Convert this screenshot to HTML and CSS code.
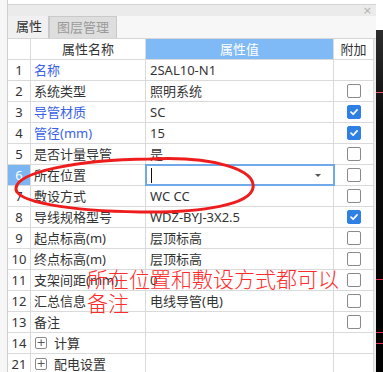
FILE: index.html
```html
<!DOCTYPE html>
<html lang="zh-CN">
<head>
  <meta charset="UTF-8" />
  <title>属性</title>
  <link rel="stylesheet" href="styles.css">
</head>
<body>
  <div class="screen">
    <div class="gutter"></div>

    <div class="panel">
      <div class="titlebar"><span class="close">×</span></div>
      <div class="tabs">
        <div class="tab active">属性</div>
        <div class="tab">图层管理</div>
      </div>

      <div class="grid-wrap">
        <div class="props">
          <div class="row head">
            <div class="cell num"></div>
            <div class="cell name center">属性名称</div>
            <div class="cell value center hl">属性值</div>
            <div class="cell add center">附加</div>
          </div>

          <div class="row">
            <div class="cell num">1</div>
            <div class="cell name key">名称</div>
            <div class="cell value">2SAL10-N1</div>
            <div class="cell add"></div>
          </div>
          <div class="row">
            <div class="cell num">2</div>
            <div class="cell name">系统类型</div>
            <div class="cell value">照明系统</div>
            <div class="cell add"><span class="box"></span></div>
          </div>
          <div class="row">
            <div class="cell num">3</div>
            <div class="cell name key">导管材质</div>
            <div class="cell value">SC</div>
            <div class="cell add"><span class="box on"><svg viewBox="0 0 14 14"><path d="M3.5 7.2 L6 9.6 L10.6 4.6" /></svg></span></div>
          </div>
          <div class="row">
            <div class="cell num">4</div>
            <div class="cell name key">管径(mm)</div>
            <div class="cell value">15</div>
            <div class="cell add"><span class="box on"><svg viewBox="0 0 14 14"><path d="M3.5 7.2 L6 9.6 L10.6 4.6" /></svg></span></div>
          </div>
          <div class="row">
            <div class="cell num">5</div>
            <div class="cell name">是否计量导管</div>
            <div class="cell value">是</div>
            <div class="cell add"><span class="box"></span></div>
          </div>
          <div class="row">
            <div class="cell num current">6</div>
            <div class="cell name">所在位置</div>
            <div class="cell value editing"><span class="caret"></span><span class="drop"></span></div>
            <div class="cell add"><span class="box"></span></div>
          </div>
          <div class="row">
            <div class="cell num">7</div>
            <div class="cell name">敷设方式</div>
            <div class="cell value">WC CC</div>
            <div class="cell add"><span class="box"></span></div>
          </div>
          <div class="row">
            <div class="cell num">8</div>
            <div class="cell name">导线规格型号</div>
            <div class="cell value">WDZ-BYJ-3X2.5</div>
            <div class="cell add"><span class="box on"><svg viewBox="0 0 14 14"><path d="M3.5 7.2 L6 9.6 L10.6 4.6" /></svg></span></div>
          </div>
          <div class="row">
            <div class="cell num">9</div>
            <div class="cell name">起点标高(m)</div>
            <div class="cell value">层顶标高</div>
            <div class="cell add"><span class="box"></span></div>
          </div>
          <div class="row">
            <div class="cell num">10</div>
            <div class="cell name">终点标高(m)</div>
            <div class="cell value">层顶标高</div>
            <div class="cell add"><span class="box"></span></div>
          </div>
          <div class="row">
            <div class="cell num">11</div>
            <div class="cell name">支架间距(mm)</div>
            <div class="cell value">0</div>
            <div class="cell add"><span class="box"></span></div>
          </div>
          <div class="row">
            <div class="cell num">12</div>
            <div class="cell name">汇总信息</div>
            <div class="cell value">电线导管(电)</div>
            <div class="cell add"><span class="box"></span></div>
          </div>
          <div class="row">
            <div class="cell num">13</div>
            <div class="cell name">备注</div>
            <div class="cell value"></div>
            <div class="cell add"><span class="box"></span></div>
          </div>
          <div class="row">
            <div class="cell num">14</div>
            <div class="cell name"><span class="plus">+</span>计算</div>
            <div class="cell value"></div>
            <div class="cell add"></div>
          </div>
          <div class="row">
            <div class="cell num">21</div>
            <div class="cell name"><span class="plus">+</span>配电设置</div>
            <div class="cell value"></div>
            <div class="cell add"></div>
          </div>
        </div>
        <div class="vscroll"></div>
      </div>
    </div>

    <div class="cad-strip"><span class="cad-top"></span></div>

    <!-- hand-drawn annotation on top of the grid -->
    <svg class="mark" viewBox="0 0 383 372">
      <path d="M150 159 C 215 156, 256 170, 253 188 C 250 204, 205 213, 140 212 C 70 211, 14 202, 16 188 C 18 172, 75 160, 150 159 Z" />
    </svg>
    <div class="note">所在位置和敷设方式都可以<br>备注</div>
  </div>
</body>
</html>
```

FILE: styles.css
```css
* {
  margin: 0;
  padding: 0;
  box-sizing: border-box;
}

body {
  background: #ffffff;
  font-family: "Noto Sans", "Noto Sans CJK SC", sans-serif;
  font-size: 13px;
  color: #333;
}

.screen {
  position: relative;
  width: 383px;
  height: 372px;
  display: flex;
  overflow: hidden;
}

.gutter {
  width: 8px;
  background: #f6f6f6;
  border-right: 1px solid #cfcfcf;
}

.panel {
  width: 368px;
  padding-top: 4px;
  display: flex;
  flex-direction: column;
}

.titlebar {
  height: 12px;
  border-top: 1px solid #d4d4d4;
  background: #ebebeb;
  display: flex;
  justify-content: flex-end;
  align-items: center;
  padding-right: 4px;
}

.titlebar .close {
  font-family: "DejaVu Sans", sans-serif;
  font-size: 11px;
  line-height: 11px;
  color: #b0b0b0;
}

.tabs {
  height: 23px;
  display: flex;
  background: #f7f7f7;
  border-bottom: 1px solid #d6d6d6;
}

.tab {
  height: 22px;
  padding: 0 7px;
  line-height: 21px;
  background: #dedede;
  color: #9a9a9a;
  border: 1px solid #c9c9c9;
  border-bottom: none;
  font-size: 13px;
}

.tab.active {
  width: 41px;
  padding: 0 0 0 8px;
  background: #f0f0f0;
  color: #333;
  border-left: none;
  border-top: none;
}

.grid-wrap {
  flex: 1;
  display: flex;
}

.props {
  width: 366px;
}

.vscroll {
  width: 2px;
  background: #ececec;
}

.row {
  display: grid;
  grid-template-columns: 23px 115px 188px 40px;
  height: 21px;
  border-bottom: 1px solid #dadada;
}

.cell {
  border-right: 1px solid #dadada;
  display: flex;
  align-items: center;
  white-space: nowrap;
  overflow: hidden;
  line-height: 20px;
}

.cell.num {
  justify-content: center;
  color: #333;
}

.cell.num.current {
  background: #7cb6f2;
  color: #fff;
}

.cell.name {
  padding-left: 3px;
}

.cell.value {
  padding-left: 4px;
}

.cell.center {
  justify-content: center;
  padding-left: 0;
}

.cell.add {
  justify-content: center;
}

.head .cell.hl {
  background: #80baf6;
  color: #fff;
}

.key {
  color: #3a62e8;
}

.cell.editing {
  position: relative;
  outline: 2px solid #70a9e9;
  outline-offset: -1px;
}

.caret {
  width: 1px;
  height: 15px;
  background: #111;
  margin-left: 1px;
}

.drop {
  position: absolute;
  right: 12px;
  top: 9px;
  border-left: 3px solid transparent;
  border-right: 3px solid transparent;
  border-top: 3px solid #555;
}

.box {
  width: 14px;
  height: 14px;
  border: 1px solid #8a8a8a;
  border-radius: 2px;
  background: #fff;
  display: block;
}

.box.on {
  background: #2f80e4;
  border-color: #2f80e4;
}

.box svg {
  display: block;
  width: 12px;
  height: 12px;
}

.box svg path {
  fill: none;
  stroke: #fff;
  stroke-width: 2;
  stroke-linecap: round;
  stroke-linejoin: round;
}

.plus {
  width: 12px;
  height: 12px;
  border: 1px solid #8a8a8a;
  border-radius: 2px;
  font-family: "DejaVu Sans", sans-serif;
  font-size: 11px;
  line-height: 10px;
  text-align: center;
  color: #555;
  margin: 0 7px 0 1px;
}

.cad-strip {
  width: 7px;
  background:
    linear-gradient(#e85a6a, #e85a6a) 0 92px / 100% 1px no-repeat,
    linear-gradient(#e0304a, #e0304a) 0 279px / 100% 1px no-repeat,
    linear-gradient(#e0304a, #e0304a) 0 332px / 100% 1px no-repeat,
    linear-gradient(#e0304a, #e0304a) 0 343px / 100% 1px no-repeat,
    linear-gradient(#383838, #0c0c0c 120px, #000);
  position: relative;
}

.cad-top {
  display: block;
  height: 30px;
  background: #ffffff;
}

.mark {
  position: absolute;
  left: 0;
  top: 0;
  width: 383px;
  height: 372px;
  pointer-events: none;
}

.mark path {
  fill: none;
  stroke: #ee1c1c;
  stroke-width: 3;
}

.note {
  position: absolute;
  left: 87px;
  top: 266px;
  font-family: "Noto Sans CJK SC", sans-serif;
  font-size: 21px;
  line-height: 24px;
  font-weight: 300;
  color: #ff2a2a;
  white-space: nowrap;
}
```
